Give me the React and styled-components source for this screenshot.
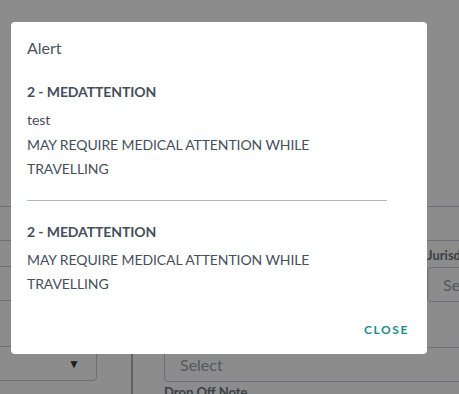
import React from "react";
import styled, { createGlobalStyle } from "styled-components";

const Global = createGlobalStyle`
  html, body { margin: 0; padding: 0; }
  body { font-family: "Lato", "Open Sans", sans-serif; background: #fff; }
  * { box-sizing: border-box; }
`;

const Page = styled.div`
  position: relative;
  width: 459px;
  height: 394px;
  overflow: hidden;
  display: flex;
  align-items: flex-start;
  background: #fff;
`;

const LeftCol = styled.div`
  flex: 0 0 141px;
  margin-left: -10px;
  padding-top: 206px;
  display: flex;
  flex-direction: column;
`;

const Box = styled.div`
  flex-shrink: 0;
  height: 35px;
  width: 107px;
  border: 1px solid #c5ccd3;
  border-radius: 4px;
  margin-bottom: ${(p) => p.$mb || 0}px;
  display: flex;
  align-items: center;
  justify-content: flex-end;
  padding-right: 16px;
  font-size: 12px;
  color: #333;
`;

const VDivider = styled.div`
  flex: 0 0 2px;
  margin-top: 190px;
  height: 204px;
  background: #a9b8c4;
`;

const RightCol = styled.div`
  flex: 0 0 auto;
  padding-left: 31px;
  padding-top: 206px;
  display: flex;
  flex-direction: column;
`;

const InputBox = styled.div`
  flex-shrink: 0;
  height: 35px;
  width: ${(p) => p.$w || 400}px;
  border: 1px solid #c5ccd3;
  border-radius: 4px;
  display: flex;
  align-items: center;
  padding-left: 15px;
  font-size: 16px;
  color: #9aa3ab;
  white-space: nowrap;
  overflow: hidden;
  margin-bottom: ${(p) => p.$mb || 0}px;
`;

const FieldRow = styled.div`
  flex-shrink: 0;
  display: flex;
  gap: 12px;
  margin-top: 4px;
  margin-bottom: 45px;
`;

const Field = styled.div`
  flex: 0 0 ${(p) => p.$w}px;
  display: flex;
  flex-direction: column;
`;

const Label = styled.div`
  flex-shrink: 0;
  font-size: 13px;
  font-weight: 700;
  color: #6b7680;
  height: 22px;
  line-height: 20px;
  white-space: nowrap;
`;

const Overlay = styled.div`
  position: absolute;
  inset: 0;
  background: rgba(0, 0, 0, 0.45);
`;

const Modal = styled.div`
  position: absolute;
  left: 11px;
  top: 22px;
  width: 416px;
  height: 332px;
  background: #fff;
  border-radius: 4px;
  display: flex;
  flex-direction: column;
  color: #454f5b;
`;

const Title = styled.div`
  padding: 14px 16px 0;
  font-size: 16px;
  line-height: 24px;
  color: #4a545e;
`;

const Content = styled.div`
  padding: 20px 16px 0;
  width: 392px;
  font-size: 14px;
  line-height: 24px;
`;

const AlertTitle = styled.div`
  font-weight: 700;
  letter-spacing: -0.1px;
  margin-bottom: 4px;
`;

const Text = styled.div`
  letter-spacing: -0.1px;
  margin-top: ${(p) => p.$mt || 0}px;
`;

const Sep = styled.hr`
  border: none;
  border-top: 1px solid #a3bcc7;
  margin: 19px 0 19px;
`;

const Actions = styled.div`
  margin-top: auto;
  display: flex;
  justify-content: flex-end;
  padding: 0 10px 11px;
`;

const CloseBtn = styled.button`
  background: none;
  border: none;
  font-family: inherit;
  font-size: 12px;
  font-weight: 700;
  letter-spacing: 1.6px;
  color: #1c8a8f;
  padding: 6px 8px;
  cursor: pointer;
`;

export default function App() {
  return (
    <>
      <Global />
      <Page>
        <LeftCol>
          <Box $mb={25} />
          <Box $mb={45} />
          <Box>▼</Box>
        </LeftCol>
        <VDivider />
        <RightCol>
          <InputBox />
          <FieldRow>
            <Field $w={251}>
              <Label>&nbsp;</Label>
              <InputBox $w={251} />
            </Field>
            <Field $w={200}>
              <Label>Jurisdiction</Label>
              <InputBox $w={200}>Select</InputBox>
            </Field>
          </FieldRow>
          <InputBox>Select</InputBox>
          <Label>Drop Off Note</Label>
        </RightCol>
        <Overlay />
        <Modal>
          <Title>Alert</Title>
          <Content>
            <AlertTitle>2 - MEDATTENTION</AlertTitle>
            <Text>test</Text>
            <Text $mt={1}>MAY REQUIRE MEDICAL ATTENTION WHILE TRAVELLING</Text>
            <Sep />
            <AlertTitle>2 - MEDATTENTION</AlertTitle>
            <Text>MAY REQUIRE MEDICAL ATTENTION WHILE TRAVELLING</Text>
          </Content>
          <Actions>
            <CloseBtn>CLOSE</CloseBtn>
          </Actions>
        </Modal>
      </Page>
    </>
  );
}
